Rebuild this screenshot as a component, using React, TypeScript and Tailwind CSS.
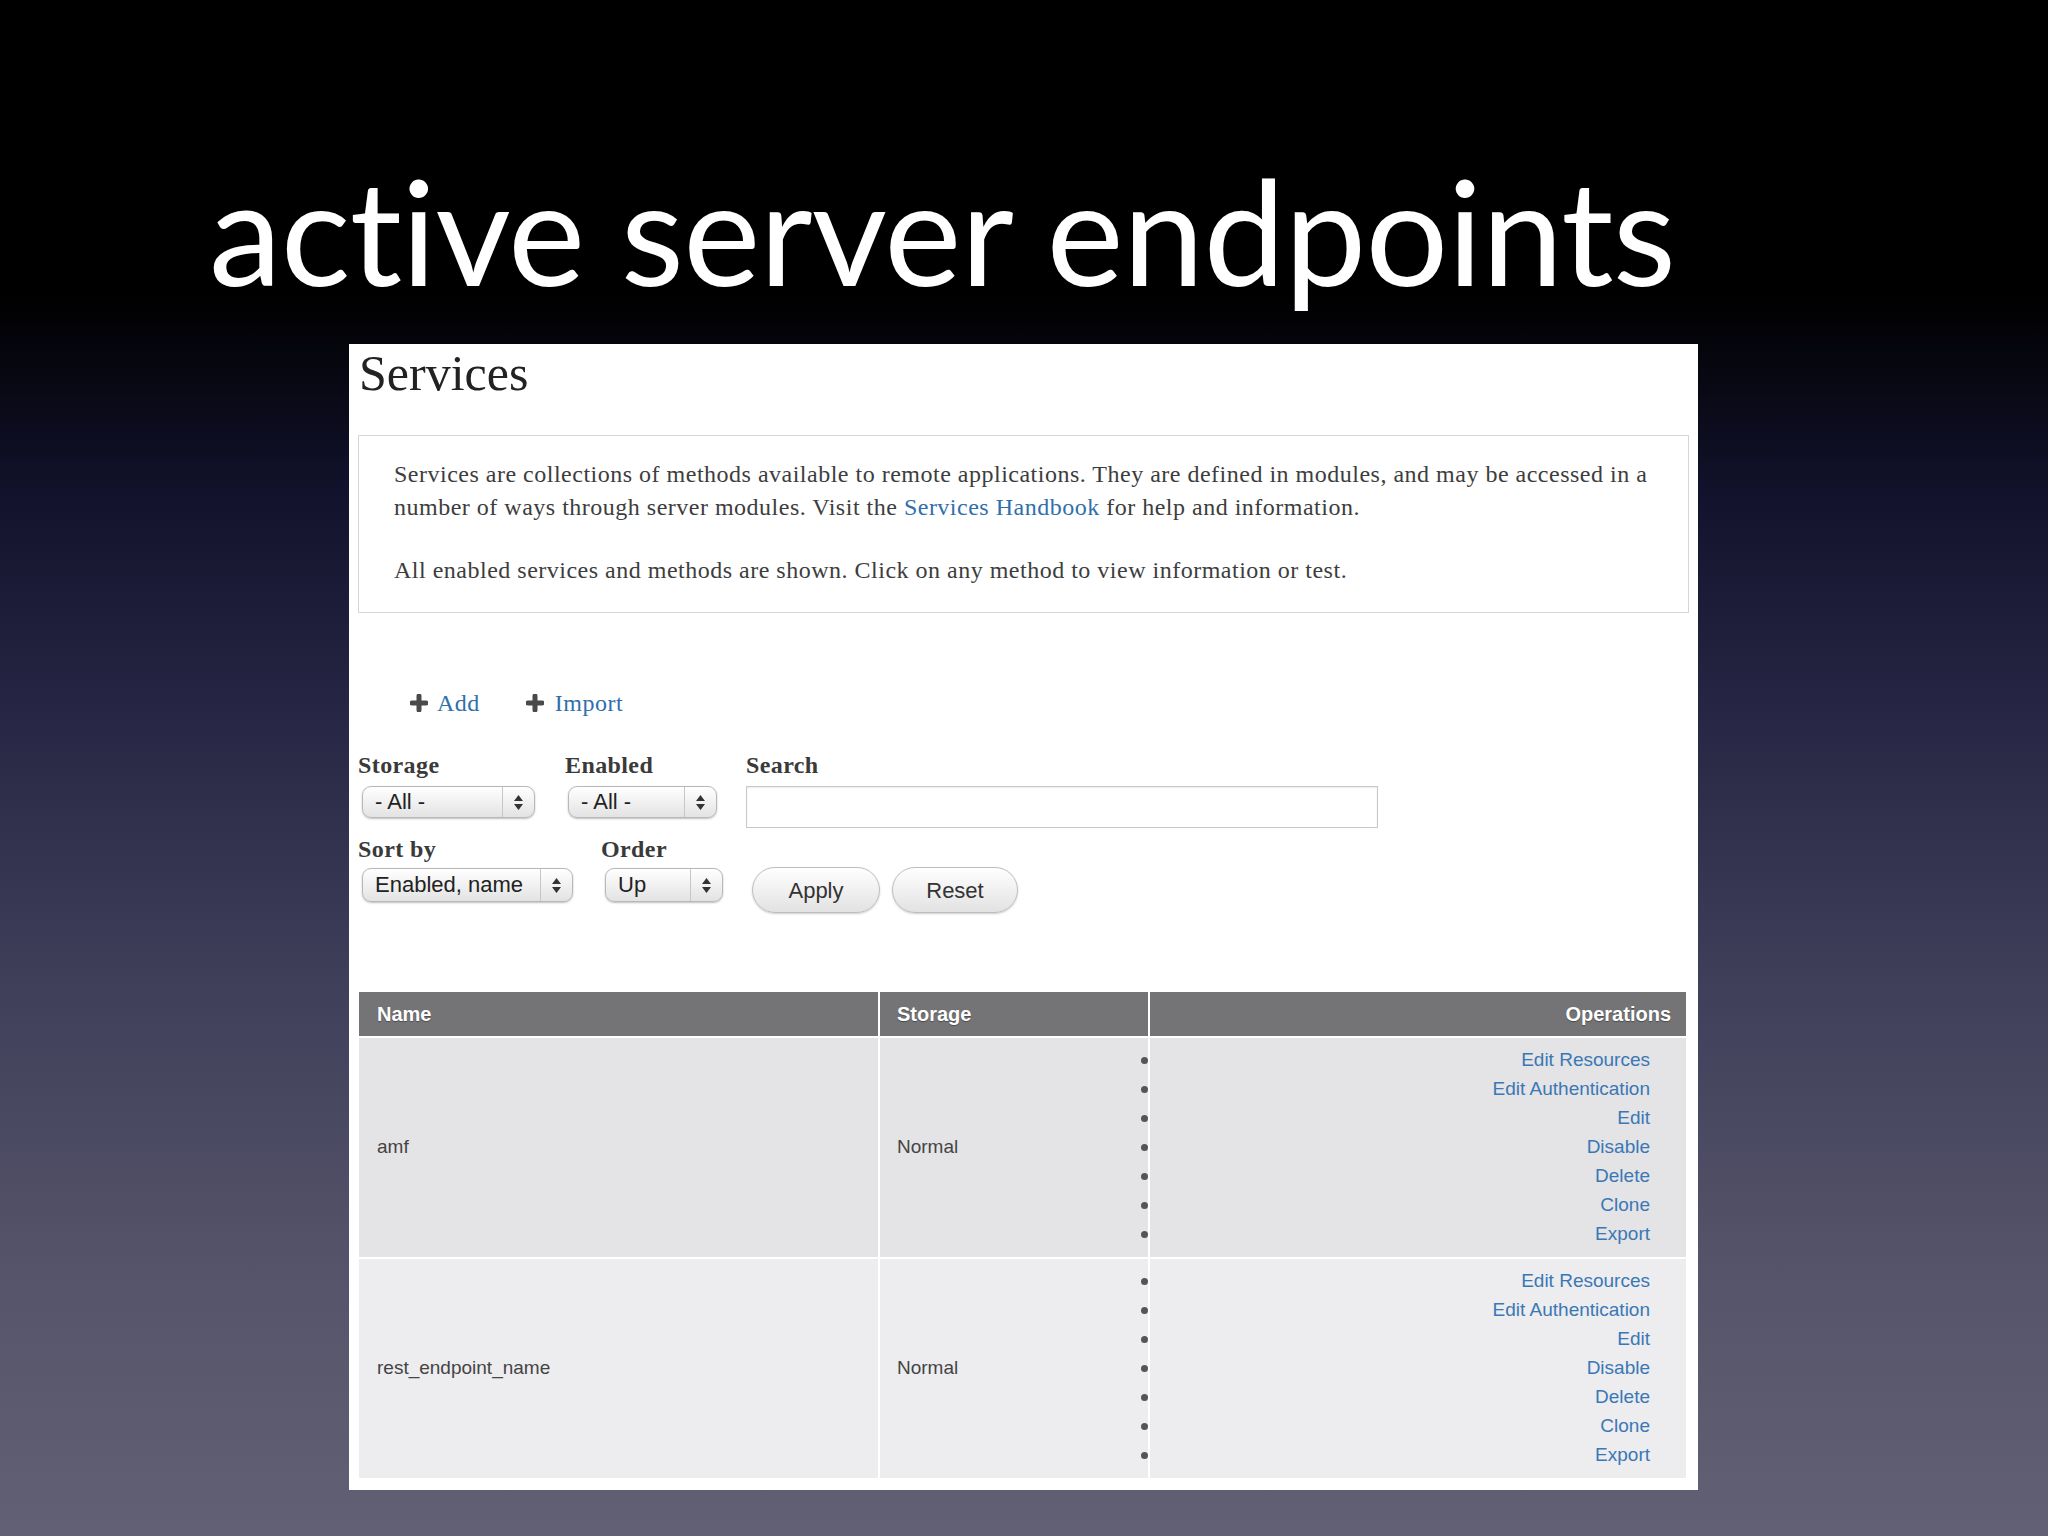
import React from 'react';

const ops = ['Edit Resources', 'Edit Authentication', 'Edit', 'Disable', 'Delete', 'Clone', 'Export'];

const rows = [
  { name: 'amf', storage: 'Normal', bg: 'bg-[#e4e3e6]' },
  { name: 'rest_endpoint_name', storage: 'Normal', bg: 'bg-[#edecef]' },
];

function Arrows() {
  return (
    <svg width="9" height="15" viewBox="0 0 9 15" className="text-[#333]">
      <path d="M4.5 0 L9 6 H0 Z M4.5 15 L0 9 H9 Z" fill="currentColor" />
    </svg>
  );
}

function Select({ value, className }: { value: string; className: string }) {
  return (
    <div
      className={`flex items-stretch rounded-[9px] border border-[#b8b8b8] bg-gradient-to-b from-white to-[#e3e3e3] shadow-[0_1px_2px_rgba(0,0,0,0.25)] ${className}`}
    >
      <span className="flex flex-1 items-center whitespace-pre pl-[12px] text-[22px] leading-none text-[#222]">{value}</span>
      <span className="flex w-[32px] items-center justify-center border-l border-[#c6c6c6]">
        <Arrows />
      </span>
    </div>
  );
}

function Plus() {
  return (
    <svg width="18" height="18" viewBox="0 0 18 18">
      <path d="M9 2 V16 M2 9 H16" stroke="#4a4a4a" strokeWidth="5" strokeLinecap="round" />
    </svg>
  );
}

function Button({ label, className }: { label: string; className: string }) {
  return (
    <button
      className={`flex h-[46px] items-center justify-center rounded-full border border-[#bdbdbd] bg-gradient-to-b from-white to-[#e2e2e2] text-[22px] text-[#333] shadow-[0_1px_2px_rgba(0,0,0,0.2)] ${className}`}
    >
      {label}
    </button>
  );
}

export default function App() {
  return (
    <div className="h-[1536px] w-[2048px] overflow-hidden bg-[linear-gradient(to_bottom,#000_0%,#000_19%,#12122c_32%,#262644_46%,#3f3f5a_64%,#545369_82%,#626074_100%)] font-['Liberation_Serif',serif] [font-variant-ligatures:none]">
      <h1 className="pl-[209px] pt-[157px] font-['Lato',sans-serif] text-[146px] leading-none font-normal tracking-[-0.8px] text-white">
        active server endpoints
      </h1>

      <div className="ml-[349px] mt-[41px] w-[1349px] bg-white px-[9px] pb-[12px] pt-[4px]">
        <h2 className="ml-[1px] text-[50px] leading-[50px] text-[#222]">Services</h2>

        <div className="mt-[37px] border border-[#d6d6d6] pb-[25px] pl-[35px] pr-[20px] pt-[22px] text-[24px] leading-[33px] tracking-[0.5px] text-[#3d3d3d]">
          <p className="whitespace-nowrap">
            Services are collections of methods available to remote applications. They are defined in modules, and may be accessed in a
            <br />
            number of ways through server modules. Visit the <span className="text-[#2f6fab]">Services Handbook</span> for help and information.
          </p>
          <p className="mt-[30px] whitespace-nowrap">All enabled services and methods are shown. Click on any method to view information or test.</p>
        </div>

        <div className="ml-[52px] mt-[77px] flex items-center text-[24px] leading-[26px] tracking-[0.5px] text-[#2f6fab]">
          <span className="flex items-center gap-[9px]">
            <Plus />
            Add
          </span>
          <span className="ml-[46px] flex items-center gap-[11px]">
            <Plus />
            Import
          </span>
        </div>

        <div className="mt-[36px] flex font-['Liberation_Sans',sans-serif]">
          <div className="w-[207px]">
            <div className="font-['Liberation_Serif',serif] text-[24px] font-bold leading-[26px] tracking-[0.4px] text-[#3a3a3a]">Storage</div>
            <Select value="- All -" className="ml-[4px] mt-[8px] h-[32px] w-[173px]" />
          </div>
          <div className="w-[181px]">
            <div className="font-['Liberation_Serif',serif] text-[24px] font-bold leading-[26px] tracking-[0.4px] text-[#3a3a3a]">Enabled</div>
            <Select value="- All -" className="ml-[3px] mt-[8px] h-[32px] w-[149px]" />
          </div>
          <div>
            <div className="font-['Liberation_Serif',serif] text-[24px] font-bold leading-[26px] tracking-[0.4px] text-[#3a3a3a]">Search</div>
            <div className="mt-[8px] h-[42px] w-[632px] border border-[#c8c8c8] bg-white shadow-[inset_0_1px_2px_rgba(0,0,0,0.08)]" />
          </div>
        </div>

        <div className="mt-[8px] flex font-['Liberation_Sans',sans-serif]">
          <div className="w-[243px]">
            <div className="font-['Liberation_Serif',serif] text-[24px] font-bold leading-[26px] tracking-[0.4px] text-[#3a3a3a]">Sort by</div>
            <Select value="Enabled, name" className="ml-[4px] mt-[6px] h-[34px] w-[211px]" />
          </div>
          <div className="w-[151px]">
            <div className="font-['Liberation_Serif',serif] text-[24px] font-bold leading-[26px] tracking-[0.4px] text-[#3a3a3a]">Order</div>
            <Select value="Up" className="ml-[4px] mt-[6px] h-[34px] w-[118px]" />
          </div>
          <div className="flex gap-[12px] pt-[31px]">
            <Button label="Apply" className="w-[128px]" />
            <Button label="Reset" className="w-[126px]" />
          </div>
        </div>

        <table className="ml-[1px] mt-[79px] w-[1327px] border-collapse font-['Liberation_Sans',sans-serif]">
          <thead>
            <tr className="h-[45px] bg-[#747376] text-[20px] font-bold text-white [text-shadow:0_1px_1px_rgba(0,0,0,0.35)]">
              <th className="w-[520px] border-r-2 border-white pl-[18px] text-left">Name</th>
              <th className="w-[270px] border-r-2 border-white pl-[17px] text-left">Storage</th>
              <th className="pr-[15px] text-right">Operations</th>
            </tr>
          </thead>
          <tbody>
            {rows.map((r) => (
              <tr key={r.name} className={`${r.bg} border-t-2 border-white text-[19px] text-[#444]`}>
                <td className="border-r-2 border-white pl-[18px] align-middle">{r.name}</td>
                <td className="border-r-2 border-white pl-[17px] align-middle">{r.storage}</td>
                <td className="py-[8px] pr-[36px] align-middle">
                  <ul>
                    {ops.map((o) => (
                      <li key={o} className="flex h-[29px] items-center justify-between">
                        <span className="-ml-[9px] h-[7px] w-[7px] rounded-full bg-[#555]" />
                        <span className="text-[#3a78b5]">{o}</span>
                      </li>
                    ))}
                  </ul>
                </td>
              </tr>
            ))}
          </tbody>
        </table>
      </div>
    </div>
  );
}
